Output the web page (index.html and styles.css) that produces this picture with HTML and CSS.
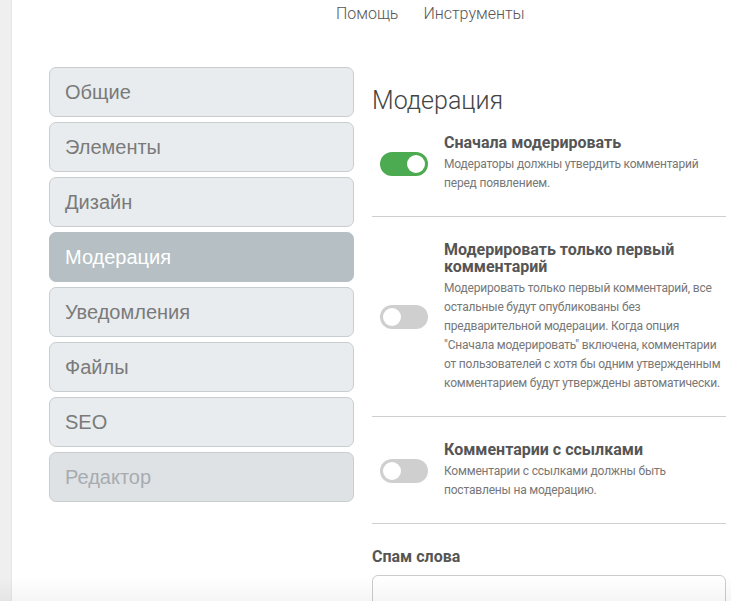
FILE: index.html
```html
<!DOCTYPE html>
<html lang="ru">
<head>
  <meta charset="UTF-8" />
  <meta name="viewport" content="width=device-width, initial-scale=1" />
  <title>Настройки комментариев</title>
  <link rel="stylesheet" href="styles.css">
</head>
<body>
  <div class="page">
    <div class="rail"></div>

    <div class="main">
      <nav class="topnav">
        <a href="#">Помощь</a>
        <a href="#">Инструменты</a>
      </nav>

      <div class="content">
        <ul class="tabs">
          <li class="tab">Общие</li>
          <li class="tab">Элементы</li>
          <li class="tab">Дизайн</li>
          <li class="tab active">Модерация</li>
          <li class="tab">Уведомления</li>
          <li class="tab">Файлы</li>
          <li class="tab">SEO</li>
          <li class="tab disabled">Редактор</li>
        </ul>

        <section class="settings">
          <h1>Модерация</h1>

          <div class="setting">
            <div class="toggle-cell"><span class="toggle on"></span></div>
            <div class="setting-text">
              <h3>Сначала модерировать</h3>
              <p>Модераторы должны утвердить комментарий перед появлением.</p>
            </div>
          </div>

          <div class="setting">
            <div class="toggle-cell"><span class="toggle"></span></div>
            <div class="setting-text">
              <h3>Модерировать только первый комментарий</h3>
              <p>Модерировать только первый комментарий, все остальные будут опубликованы без предварительной модерации. Когда опция "Сначала модерировать" включена, комментарии от пользователей с хотя бы одним утвержденным комментарием будут утверждены автоматически.</p>
            </div>
          </div>

          <div class="setting">
            <div class="toggle-cell"><span class="toggle"></span></div>
            <div class="setting-text">
              <h3>Комментарии с ссылками</h3>
              <p>Комментарии с ссылками должны быть поставлены на модерацию.</p>
            </div>
          </div>

          <div class="spam">
            <h3>Спам слова</h3>
            <textarea class="spam-input"></textarea>
          </div>
        </section>
      </div>
    </div>
  </div>

  <div class="bottom-fade"></div>
</body>
</html>
```

FILE: styles.css
```css
html, body {
  margin: 0;
  padding: 0;
  height: 100%;
  overflow: hidden;
  background: #fff;
}

body {
  font-family: Roboto, 'Liberation Sans', sans-serif;
  color: #555;
}

.page {
  display: flex;
  min-height: 100%;
}

.rail {
  width: 11px;
  flex-shrink: 0;
  background: #efefef;
  border-right: 1px solid #e6e6e6;
}

.main {
  flex: 1;
}

.topnav {
  display: flex;
  gap: 25px;
  padding-left: 324px;
  height: 26px;
  align-items: center;
}

.topnav a {
  font-size: 16px;
  font-weight: 300;
  color: #555;
  text-decoration: none;
}

.content {
  display: flex;
  margin-top: 41px;
  padding-left: 37px;
}

.tabs {
  list-style: none;
  margin: 0;
  padding: 0;
  width: 305px;
  flex-shrink: 0;
  display: flex;
  flex-direction: column;
  gap: 5px;
}

.tab {
  box-sizing: border-box;
  height: 50px;
  display: flex;
  align-items: center;
  padding-left: 15px;
  background: #e8ecee;
  border: 1px solid #c8cdd0;
  border-radius: 7px;
  font-family: 'Liberation Sans', Arial, sans-serif;
  font-size: 20px;
  color: #7a7a7a;
}

.tab.active {
  background: #b5bfc4;
  border-color: #b5bfc4;
  color: #fff;
}

.tab.disabled {
  background: #dee2e5;
  color: #a7acb0;
}

.settings {
  width: 354px;
  margin-left: 18px;
  padding-top: 25px;
}

.settings h1 {
  margin: 0;
  font-size: 25px;
  line-height: 18px;
  font-weight: 300;
  color: #444;
}

.setting {
  display: flex;
  align-items: center;
  padding: 24px 0 23px;
  border-bottom: 1px solid #cfcfcf;
}

.toggle-cell {
  width: 72px;
  flex-shrink: 0;
}

.toggle {
  display: block;
  position: relative;
  width: 48px;
  height: 24px;
  margin-left: 8px;
  border-radius: 12px;
  background: #cfcfcf;
}

.toggle::after {
  content: "";
  position: absolute;
  top: 3px;
  left: 3px;
  width: 18px;
  height: 18px;
  border-radius: 50%;
  background: #fff;
}

.toggle.on {
  background: #4caa50;
}

.toggle.on::after {
  left: 27px;
}

.setting-text h3,
.spam h3 {
  margin: 0 0 4px;
  font-family: Roboto, 'Liberation Sans', sans-serif;
  font-size: 16px;
  line-height: 17px;
  font-weight: bold;
  color: #555;
}

.setting-text p {
  margin: 0;
  font-size: 12px;
  line-height: 19px;
  letter-spacing: -0.2px;
  color: #777;
}

.spam {
  padding-top: 24px;
}

.spam h3 {
  margin-bottom: 10px;
}

.spam-input {
  display: block;
  box-sizing: border-box;
  width: 100%;
  height: 90px;
  border: 1px solid #cccccc;
  border-radius: 6px;
  resize: none;
}

.bottom-fade {
  position: fixed;
  left: 0;
  right: 0;
  bottom: 0;
  height: 24px;
  background: linear-gradient(rgba(0, 0, 0, 0), rgba(0, 0, 0, 0.04));
  pointer-events: none;
}
```
